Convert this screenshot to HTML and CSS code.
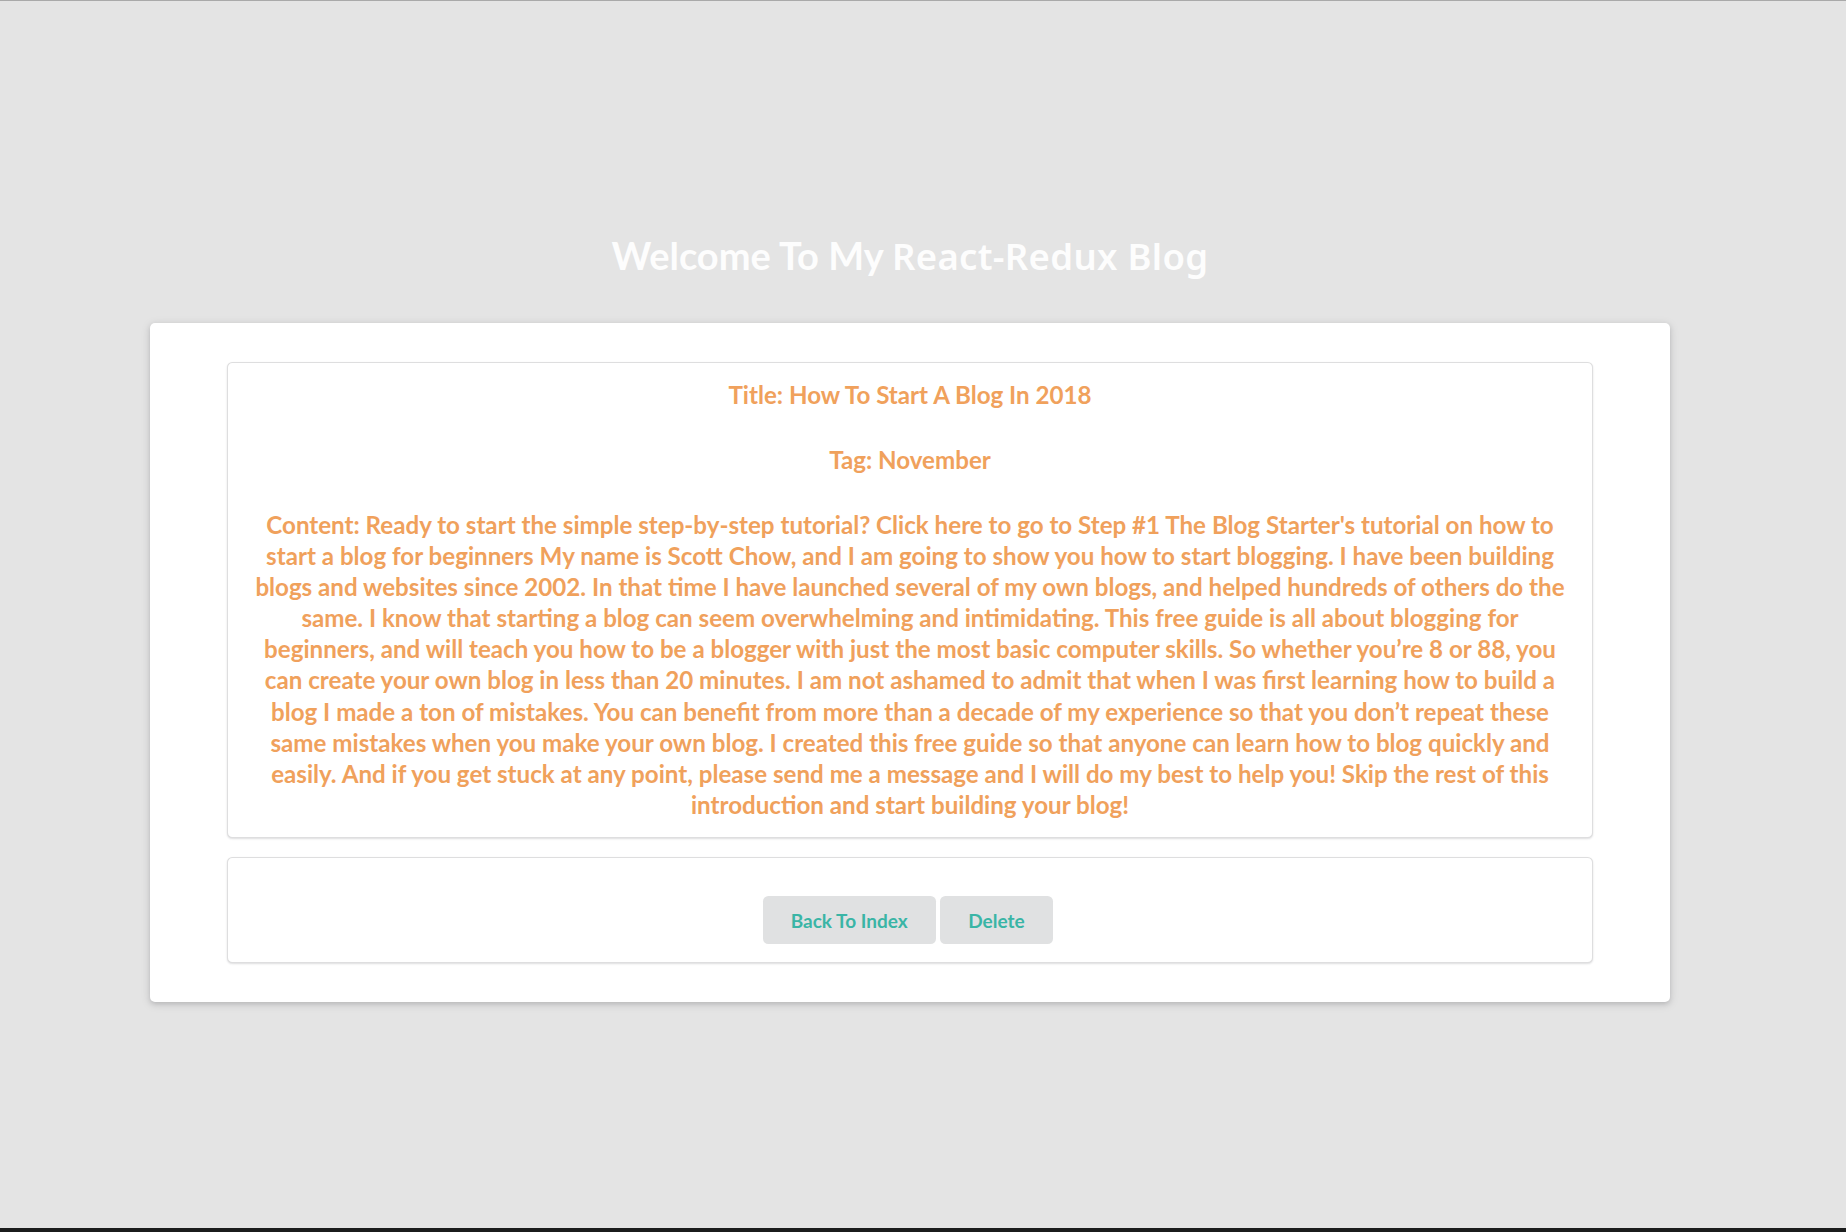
FILE: index.html
```html
<!DOCTYPE html>
<html lang="en">
<head>
<meta charset="utf-8">
<title>React-Redux Blog</title>
<link rel="stylesheet" href="styles.css">
</head>
<body>
<div class="page">
  <main class="app">
    <h1 class="site-title">Welcome To My <span class="alt">React-Redux Blog</span></h1>
    <div class="raised-segment">
      <div class="segment post">
        <h3>Title: How To Start A Blog In 2018</h3>
        <h3>Tag: November</h3>
        <h3>Content: Ready to start the simple step-by-step tutorial? Click here to go to Step #1 The Blog Starter's tutorial on how to start a blog for beginners My name is Scott Chow, and I am going to show you how to start blogging. I have been building blogs and websites since 2002. In that time I have launched several of my own blogs, and helped hundreds of others do the same. I know that starting a blog can seem overwhelming and intimidating. This free guide is all about blogging for beginners, and will teach you how to be a blogger with just the most basic computer skills. So whether you’re 8 or 88, you can create your own blog in less than 20 minutes. I am not ashamed to admit that when I was first learning how to build a blog I made a ton of mistakes. You can benefit from more than a decade of my experience so that you don’t repeat these same mistakes when you make your own blog. I created this free guide so that anyone can learn how to blog quickly and easily. And if you get stuck at any point, please send me a message and I will do my best to help you! Skip the rest of this introduction and start building your blog!</h3>
      </div>
      <div class="segment actions">
        <button class="btn">Back To Index</button>
        <button class="btn">Delete</button>
      </div>
    </div>
  </main>
  <div class="bottom-bar"></div>
</div>
</body>
</html>
```
FILE: styles.css
```css
html, body {
  margin: 0;
  padding: 0;
}
body {
  background: #e4e4e4;
  font-family: Lato, "Liberation Sans", sans-serif;
  font-size: 18.67px;
}
.page {
  height: 1232px;
  box-sizing: border-box;
  border-top: 1px solid #a9a9a9;
  display: flex;
  flex-direction: column;
  overflow: hidden;
}
.app {
  flex: 1;
  width: 1820px;
  display: flex;
  flex-direction: column;
  align-items: center;
}
.site-title {
  margin: 230px 0 0 0;
  font-family: Lato, sans-serif;
  font-weight: 700;
  font-size: 38px;
  line-height: 48px;
  color: #fdfdfd;
  text-align: center;
}
.site-title .alt {
  font-family: "Noto Sans", sans-serif;
  font-weight: 600;
  font-size: 36.5px;
  letter-spacing: 0.3px;
}
.raised-segment {
  margin-top: 43px;
  width: 1520px;
  box-sizing: border-box;
  background: #fff;
  border-radius: 5px;
  padding: 39px 77px;
  box-shadow: 0 2px 4px 0 rgba(34,36,38,.12), 0 2px 10px 0 rgba(34,36,38,.15);
  display: flex;
  flex-direction: column;
  gap: 19px;
}
.segment {
  background: #fff;
  border: 1px solid rgba(34,36,38,.15);
  border-radius: 5.33px;
  box-shadow: 0 1px 2px 0 rgba(34,36,38,.15);
}
.post {
  padding: 16px 24px 17.5px;
  text-align: center;
}
.post h3 {
  margin: 33.9px 0 0 0;
  font-family: Lato, sans-serif;
  font-weight: 700;
  font-size: 24.15px;
  line-height: 31.1px;
  color: #f0a15c;
}
.post h3:first-child {
  margin-top: 0;
}
.actions {
  padding: 38px 18.67px 18px;
  display: flex;
  justify-content: center;
}
.btn {
  border: 0;
  margin: 0 4.67px 0 0;
  background: #e0e1e2;
  color: #3ab5a6;
  font-family: Lato, sans-serif;
  font-weight: 700;
  font-size: 19px;
  line-height: 1em;
  padding: 14.5px 28px;
  border-radius: 5.33px;
  cursor: pointer;
}
.bottom-bar {
  height: 4px;
  background: #1b1c1c;
}
```
